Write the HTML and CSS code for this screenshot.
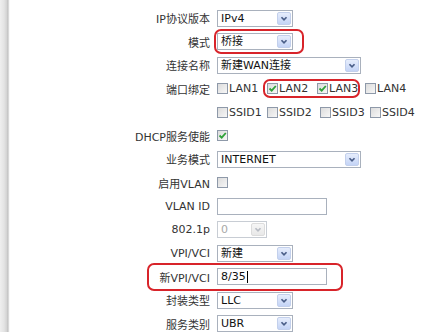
FILE: index.html
```html
<!DOCTYPE html>
<html>
<head>
<meta charset="utf-8">
<link rel="stylesheet" href="styles.css">
</head>
<body>
<div class="page">
  <div class="edge"></div>
  <div class="form">
    <div class="lbl">IP协议版本</div>
    <div class="ctl"><div class="sel w76"><span class="val">IPv4</span><span class="btn"><svg viewBox="0 0 13 13"><path d="M3.5 5 L6.5 8 L9.5 5"/></svg></span></div></div>

    <div class="lbl">模式</div>
    <div class="ctl"><div class="sel w76"><span class="val">桥接</span><span class="btn"><svg viewBox="0 0 13 13"><path d="M3.5 5 L6.5 8 L9.5 5"/></svg></span></div></div>

    <div class="lbl">连接名称</div>
    <div class="ctl"><div class="sel w144"><span class="val">新建WAN连接</span><span class="btn"><svg viewBox="0 0 13 13"><path d="M3.5 5 L6.5 8 L9.5 5"/></svg></span></div></div>

    <div class="lbl">端口绑定</div>
    <div class="ctl">
      <label class="opt g50"><span class="cb"></span>LAN1</label>
      <label class="opt g50"><span class="cb on"><svg viewBox="0 0 9 9"><path d="M1.5 4.5 L3.7 6.7 L7.8 2"/></svg></span>LAN2</label>
      <label class="opt g48"><span class="cb on"><svg viewBox="0 0 9 9"><path d="M1.5 4.5 L3.7 6.7 L7.8 2"/></svg></span>LAN3</label>
      <label class="opt"><span class="cb"></span>LAN4</label>
    </div>

    <div class="lbl"></div>
    <div class="ctl">
      <label class="opt g50"><span class="cb"></span>SSID1</label>
      <label class="opt g53"><span class="cb"></span>SSID2</label>
      <label class="opt g50"><span class="cb"></span>SSID3</label>
      <label class="opt"><span class="cb"></span>SSID4</label>
    </div>

    <div class="lbl">DHCP服务使能</div>
    <div class="ctl"><span class="cb on"><svg viewBox="0 0 9 9"><path d="M1.5 4.5 L3.7 6.7 L7.8 2"/></svg></span></div>

    <div class="lbl">业务模式</div>
    <div class="ctl"><div class="sel w144"><span class="val">INTERNET</span><span class="btn"><svg viewBox="0 0 13 13"><path d="M3.5 5 L6.5 8 L9.5 5"/></svg></span></div></div>

    <div class="lbl">启用VLAN</div>
    <div class="ctl"><span class="cb"></span></div>

    <div class="lbl">VLAN ID</div>
    <div class="ctl"><div class="inp"></div></div>

    <div class="lbl">802.1p</div>
    <div class="ctl"><div class="sel w50 dis"><span class="val">0</span><span class="btn"><svg viewBox="0 0 13 13"><path d="M3.5 5 L6.5 8 L9.5 5"/></svg></span></div></div>

    <div class="lbl">VPI/VCI</div>
    <div class="ctl"><div class="sel w76"><span class="val">新建</span><span class="btn"><svg viewBox="0 0 13 13"><path d="M3.5 5 L6.5 8 L9.5 5"/></svg></span></div></div>

    <div class="lbl">新VPI/VCI</div>
    <div class="ctl"><div class="inp"><span class="val">8/35</span><span class="caret"></span></div></div>

    <div class="lbl">封装类型</div>
    <div class="ctl"><div class="sel w76"><span class="val">LLC</span><span class="btn"><svg viewBox="0 0 13 13"><path d="M3.5 5 L6.5 8 L9.5 5"/></svg></span></div></div>

    <div class="lbl">服务类别</div>
    <div class="ctl"><div class="sel w76"><span class="val">UBR</span><span class="btn"><svg viewBox="0 0 13 13"><path d="M3.5 5 L6.5 8 L9.5 5"/></svg></span></div></div>
  </div>

  <div class="mark mark-mode"></div>
  <div class="mark mark-lan"></div>
  <div class="mark mark-vpi"></div>
</div>
</body>
</html>
```

FILE: styles.css
```css
html, body {
  margin: 0;
  padding: 0;
  background: #ffffff;
}

.page {
  position: relative;
  display: flex;
  width: 448px;
  height: 332px;
  overflow: hidden;
  font-family: "DejaVu Sans", Verdana, "Noto Sans CJK SC", sans-serif;
  font-size: 11px;
  color: #2b2b2b;
}

.edge {
  width: 10px;
  flex: none;
  background: linear-gradient(to right, #efefef 0, #e4e4e4 4px, #d2d2d2 7px, #bdbdbd 8px, #f3f3f3 9px, #ffffff 10px);
}

.form {
  flex: 1;
  display: grid;
  grid-template-columns: 200px 1fr;
  column-gap: 7px;
  grid-auto-rows: 23.5px;
  padding-top: 6.3px;
}

.lbl {
  display: flex;
  align-items: center;
  justify-content: flex-end;
  white-space: nowrap;
  color: #333333;
}

.ctl {
  display: flex;
  align-items: center;
  white-space: nowrap;
}

/* select */
.sel {
  box-sizing: border-box;
  height: 17px;
  display: flex;
  align-items: center;
  border: 1px solid #a9b1bd;
  background: #ffffff;
  padding-left: 3px;
  color: #111111;
}
.sel .val {
  flex: 1;
  line-height: 15px;
}
.sel .btn {
  box-sizing: border-box;
  width: 14px;
  height: 13px;
  margin-right: 1px;
  border: 1px solid #c3d0ec;
  border-radius: 2px;
  background: linear-gradient(#e6edfc, #c4d4f6);
  display: flex;
  align-items: center;
  justify-content: center;
}
.sel .btn svg {
  width: 12px;
  height: 11px;
}
.sel .btn path {
  fill: none;
  stroke: #4a5e88;
  stroke-width: 2;
}
.sel.dis {
  border-color: #c8cdd4;
  color: #a8a8a8;
}
.sel.dis .btn {
  border-color: #dcdcdc;
  background: linear-gradient(#f6f6f6, #e8e8e8);
}
.sel.dis .btn path {
  stroke: #b8bcc4;
}

.w50 { width: 50px; }
.w76 { width: 76px; }
.w144 { width: 144px; }

/* input */
.inp {
  box-sizing: border-box;
  width: 110px;
  height: 17px;
  border: 1px solid #a9b1bd;
  background: #ffffff;
  padding-left: 3px;
  display: flex;
  align-items: center;
  color: #111111;
}
.caret {
  display: inline-block;
  width: 0;
  height: 12px;
  border-left: 1px solid #000000;
  margin-left: 1px;
}

/* checkbox */
.opt {
  display: inline-flex;
  align-items: center;
  color: #333333;
}
.g48 { width: 48px; }
.g50 { width: 50px; }
.g53 { width: 53px; }

.cb {
  box-sizing: border-box;
  width: 11px;
  height: 11px;
  border: 1px solid #8e99a9;
  background: linear-gradient(135deg, #dcdcdc, #f7f7f7);
  display: inline-flex;
  align-items: center;
  justify-content: center;
  margin-right: 1px;
  flex: none;
}
.cb svg {
  width: 9px;
  height: 9px;
}
.cb path {
  fill: none;
  stroke: #2fa23a;
  stroke-width: 1.8;
}

/* red annotation marks */
.mark {
  position: absolute;
  box-sizing: border-box;
  border: 2px solid #d8242a;
  border-radius: 7px;
}
.mark-mode {
  left: 214px;
  top: 29px;
  width: 90px;
  height: 25px;
}
.mark-lan {
  left: 263px;
  top: 79px;
  width: 97px;
  height: 19px;
}
.mark-vpi {
  left: 147px;
  top: 263px;
  width: 196px;
  height: 28px;
}
```
